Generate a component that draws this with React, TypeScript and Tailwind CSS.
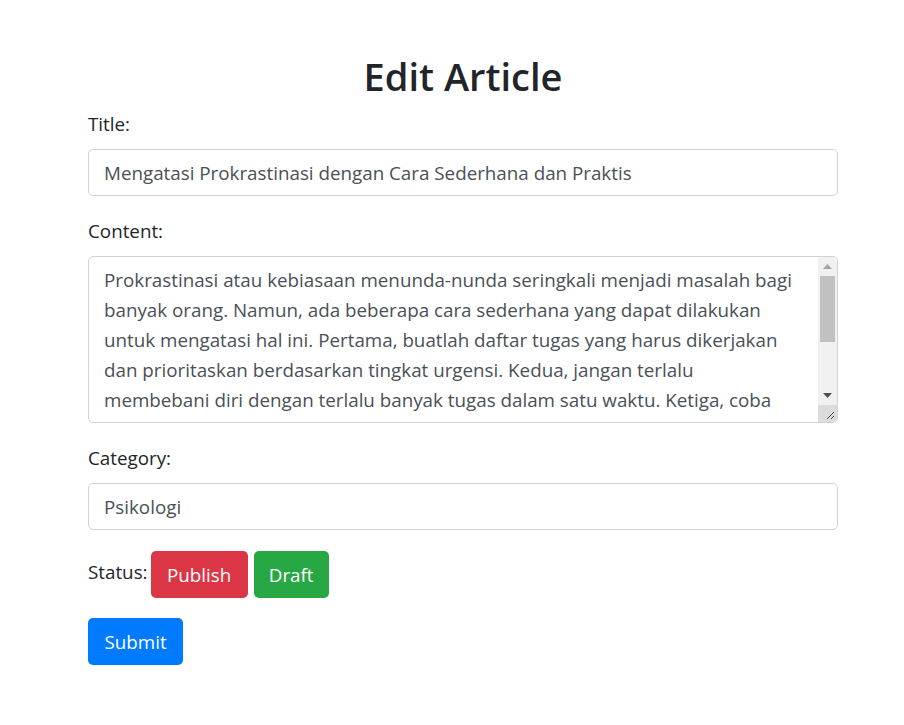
import { useState } from 'react'

const CONTENT_LINES = [
  'Prokrastinasi atau kebiasaan menunda-nunda seringkali menjadi masalah bagi',
  'banyak orang. Namun, ada beberapa cara sederhana yang dapat dilakukan',
  'untuk mengatasi hal ini. Pertama, buatlah daftar tugas yang harus dikerjakan',
  'dan prioritaskan berdasarkan tingkat urgensi. Kedua, jangan terlalu',
  'membebani diri dengan terlalu banyak tugas dalam satu waktu. Ketiga, coba',
]

function FakeScrollbar() {
  return (
    <div className="flex w-[19px] flex-col bg-[#f1f1f1]">
      <div className="flex h-[19px] items-center justify-center">
        <svg width="9" height="5" viewBox="0 0 9 5">
          <path d="M0 5 L4.5 0 L9 5 Z" fill="#a3a3a3" />
        </svg>
      </div>
      <div className="mx-[2px] h-[66px] bg-[#c1c1c1]" />
      <div className="flex-1" />
      <div className="flex h-[19px] items-center justify-center">
        <svg width="9" height="5" viewBox="0 0 9 5">
          <path d="M0 0 L9 0 L4.5 5 Z" fill="#505050" />
        </svg>
      </div>
      <div className="flex h-[17px] items-end justify-end bg-[#dcdcdc] pb-[2px] pr-[2px]">
        <svg width="9" height="9" viewBox="0 0 9 9">
          <path d="M8 1 L1 8 M8 5 L5 8" stroke="#4a4a4a" strokeWidth="1" />
        </svg>
      </div>
    </div>
  )
}

export default function App() {
  const [title, setTitle] = useState('Mengatasi Prokrastinasi dengan Cara Sederhana dan Praktis')
  const [category, setCategory] = useState('Psikologi')
  const [status, setStatus] = useState('draft')

  return (
    <div
      className="min-h-[725px] bg-white pt-[52px] text-[18.8px] leading-[30px] text-[#212529]"
      style={{ fontFamily: '"Open Sans", "Noto Sans", sans-serif' }}
    >
      <div className="ml-[88px] w-[750px]" data-status={status}>
        <h1 className="mb-[9px] text-center text-[38px] font-semibold leading-[48px]">Edit Article</h1>

        <form onSubmit={(e) => e.preventDefault()}>
          {/* Title */}
          <div className="mb-[20px]">
            <label className="mb-[10px] block">Title:</label>
            <input
              type="text"
              value={title}
              onChange={(e) => setTitle(e.target.value)}
              className="block h-[47px] w-full rounded-[5px] border border-[#ced4da] px-[15px] text-[#495057] outline-none"
            />
          </div>

          {/* Content */}
          <div className="mb-[20px]">
            <label className="mb-[10px] block">Content:</label>
            <div className="flex h-[167px] w-full overflow-hidden rounded-[5px] border border-[#ced4da]">
              <div className="flex-1 overflow-hidden px-[15px] py-[7.5px] text-[#495057]">
                {CONTENT_LINES.map((line) => (
                  <div key={line} className="whitespace-nowrap">{line}</div>
                ))}
              </div>
              <FakeScrollbar />
            </div>
          </div>

          {/* Category */}
          <div className="mb-[21px]">
            <label className="mb-[10px] block">Category:</label>
            <input
              type="text"
              value={category}
              onChange={(e) => setCategory(e.target.value)}
              className="block h-[47px] w-full rounded-[5px] border border-[#ced4da] px-[15px] text-[#495057] outline-none"
            />
          </div>

          {/* Status */}
          <div className="mb-[20px] flex items-start">
            <span className="mr-[3px] pt-[6px]">Status:</span>
            <button
              type="button"
              onClick={() => setStatus('publish')}
              className="h-[47px] rounded-[5px] bg-[#dc3545] px-[16.5px] text-white"
            >
              Publish
            </button>
            <button
              type="button"
              onClick={() => setStatus('draft')}
              className="ml-[6px] h-[47px] rounded-[5px] bg-[#28a745] px-[15px] text-white"
            >
              Draft
            </button>
          </div>

          <button type="submit" className="h-[47px] rounded-[5px] bg-[#007bff] px-[16.5px] text-white">
            Submit
          </button>
        </form>
      </div>
    </div>
  )
}
